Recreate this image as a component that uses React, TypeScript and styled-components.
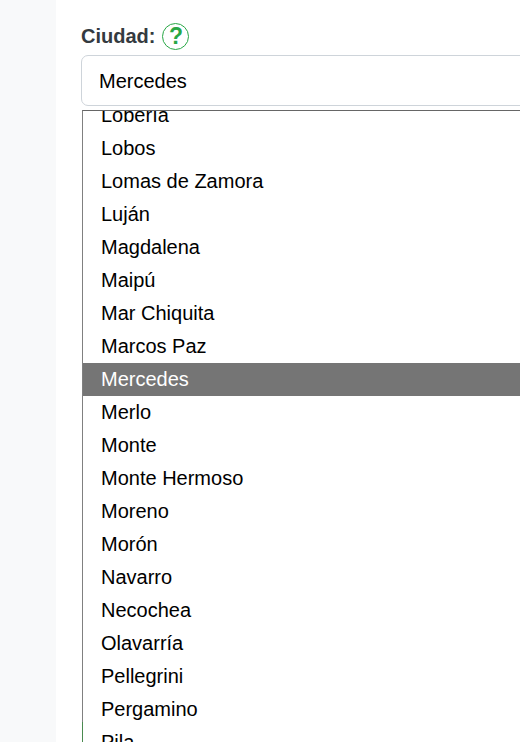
import React from 'react';
import styled, { createGlobalStyle } from 'styled-components';

const cities = [
  'Lobería',
  'Lobos',
  'Lomas de Zamora',
  'Luján',
  'Magdalena',
  'Maipú',
  'Mar Chiquita',
  'Marcos Paz',
  'Mercedes',
  'Merlo',
  'Monte',
  'Monte Hermoso',
  'Moreno',
  'Morón',
  'Navarro',
  'Necochea',
  'Olavarría',
  'Pellegrini',
  'Pergamino',
  'Pila',
];

const GlobalStyle = createGlobalStyle`
  html, body {
    margin: 0;
    height: 100%;
    overflow: hidden;
    background: #f8f9fa;
    font-family: "Liberation Sans", Arial, sans-serif;
  }
`;

const Page = styled.div`
  height: 742px;
  padding-left: 56px;
  overflow: hidden;
`;

const Card = styled.main`
  background: #fff;
  width: 600px;
  height: 100%;
  padding: 20px 25px 0;
`;

const Label = styled.div`
  display: flex;
  align-items: center;
  gap: 7px;
  height: 32px;
  margin-bottom: 3px;
  font-size: 20px;
  font-weight: 700;
  color: #343a40;
`;

const Help = styled.span`
  width: 27px;
  height: 27px;
  box-sizing: border-box;
  display: flex;
  align-items: center;
  justify-content: center;
  border: 1px solid #28a745;
  border-radius: 50%;
  color: #28a745;
  font-size: 23px;
  font-weight: 700;
`;

const Select = styled.div`
  height: 51px;
  box-sizing: border-box;
  display: flex;
  align-items: center;
  padding: 1px 0 0 17px;
  border: 1px solid #ced4da;
  border-radius: 7px;
  font-size: 20px;
  color: #000;
`;

const ListFrame = styled.div`
  position: relative;
  margin: 4px 0 0 1px;

  /* green strip that sits over the bottom of the left border */
  &::after {
    content: '';
    position: absolute;
    left: 0;
    top: 612px;
    width: 1px;
    height: 30px;
    background: #4a8a4f;
  }
`;

const List = styled.ul`
  list-style: none;
  margin: 0;
  padding: 0;
  height: 700px;
  overflow: hidden;
  border: 1px solid #666;
  border-left-color: #808080;
`;

const Inner = styled.div`
  margin-top: -12px;
`;

const Option = styled.li<{ $selected?: boolean }>`
  height: 33px;
  line-height: 33px;
  padding-left: 18px;
  font-size: 20px;
  color: ${(props) => (props.$selected ? '#fff' : '#000')};
  background: ${(props) => (props.$selected ? '#757575' : 'transparent')};
`;

const App: React.FC = () => {
  return (
    <Page>
      <GlobalStyle />
      <Card>
        <Label>
          Ciudad:
          <Help>?</Help>
        </Label>
        <Select>Mercedes</Select>
        <ListFrame>
          <List>
            <Inner>
              {cities.map((city) => (
                <Option key={city} $selected={city === 'Mercedes'}>
                  {city}
                </Option>
              ))}
            </Inner>
          </List>
        </ListFrame>
      </Card>
    </Page>
  );
};

export default App;
